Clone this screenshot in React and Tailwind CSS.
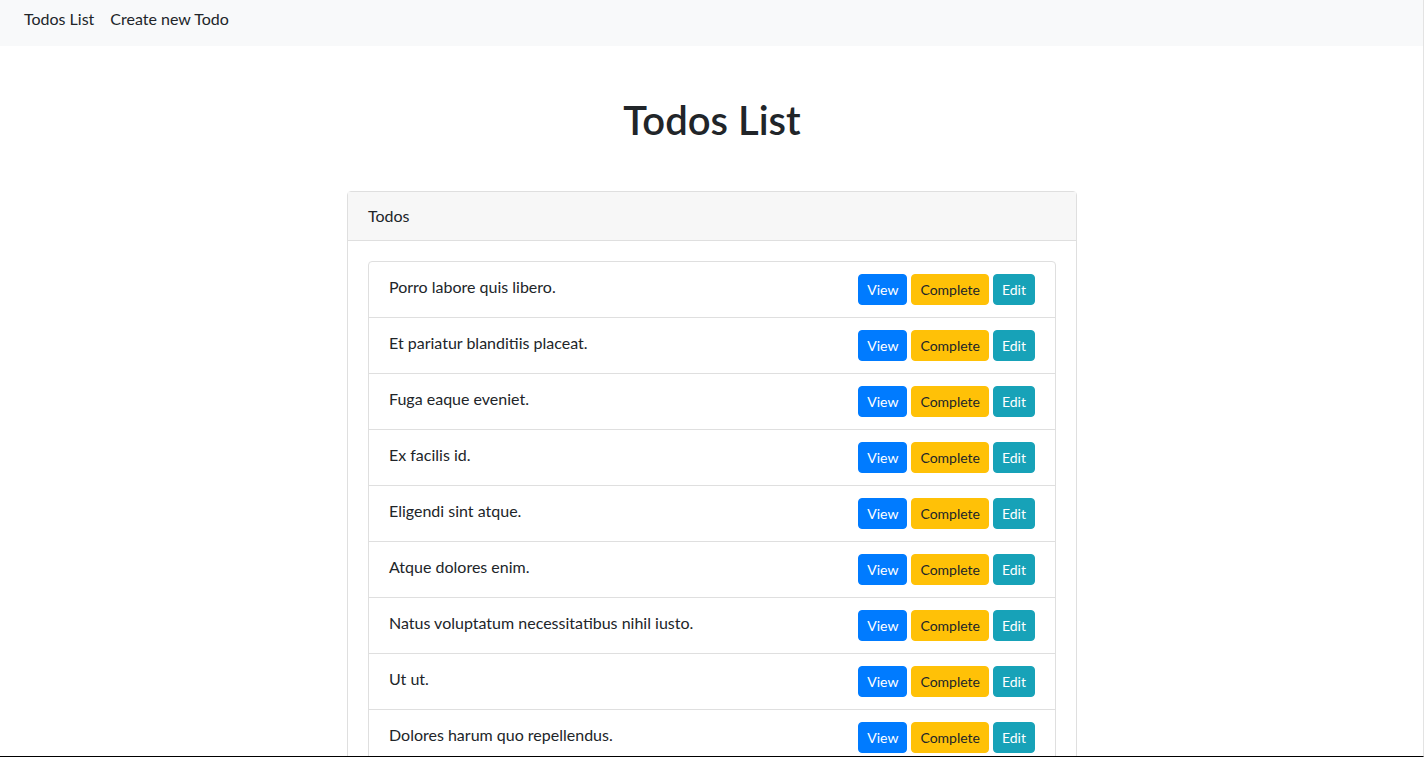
import React from "react";

const todos = [
  "Porro labore quis libero.",
  "Et pariatur blanditiis placeat.",
  "Fuga eaque eveniet.",
  "Ex facilis id.",
  "Eligendi sint atque.",
  "Atque dolores enim.",
  "Natus voluptatum necessitatibus nihil iusto.",
  "Ut ut.",
  "Dolores harum quo repellendus.",
];

export default function App() {
  return (
    <div className="min-h-screen bg-white text-[#212529] font-['Lato','Liberation_Sans',sans-serif] text-base leading-6">
      {/* Navbar */}
      <nav className="bg-[#f8f9fa] h-[46px] px-4 flex items-start">
        <a href="#" className="px-2 py-[7px] text-[#212529]">
          Todos List
        </a>
        <a href="#" className="px-2 py-[7px] text-[#212529]">
          Create new Todo
        </a>
      </nav>

      <div className="w-[730px] mx-auto">
        <h1 className="text-center text-[40px] leading-[48px] font-semibold mt-[50px] mb-[47px]">
          Todos List
        </h1>

        {/* Card */}
        <div className="border border-[#dfdfdf] rounded">
          <div className="bg-[#f7f7f7] border-b border-[#dfdfdf] px-5 py-3">
            Todos
          </div>
          <div className="p-5">
            <ul className="flex flex-col">
              {todos.map((t, i) => (
                <li
                  key={i}
                  className={`flex justify-between items-start px-5 py-3 border border-[#dfdfdf] ${
                    i === 0 ? "rounded-t" : "-mt-px"
                  } ${i === todos.length - 1 ? "rounded-b" : ""}`}
                >
                  <span className="pt-px">{t}</span>
                  <div className="flex gap-1 text-sm leading-[21px]">
                    <button className="bg-[#007bff] text-white border border-[#007bff] rounded px-2 py-1">
                      View
                    </button>
                    <button className="bg-[#ffc107] text-[#212529] border border-[#ffc107] rounded px-2 py-1">
                      Complete
                    </button>
                    <button className="bg-[#17a2b8] text-white border border-[#17a2b8] rounded px-2 py-1">
                      Edit
                    </button>
                  </div>
                </li>
              ))}
            </ul>
          </div>
        </div>
      </div>

      {/* window frame edges */}
      <div className="fixed inset-0 pointer-events-none border-r border-r-[#e3e3e3] border-b border-b-black"></div>
    </div>
  );
}
